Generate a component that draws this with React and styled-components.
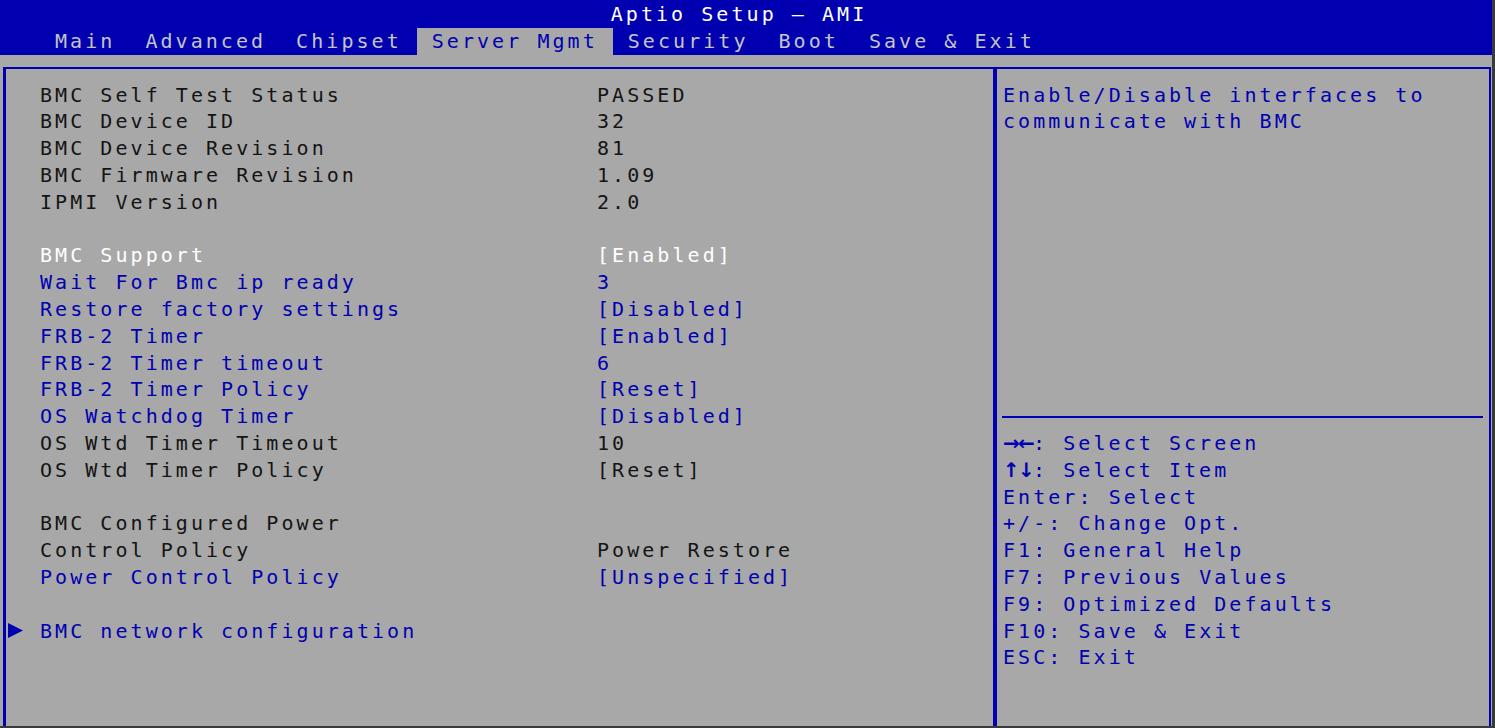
import React from 'react';
import styled, { createGlobalStyle } from 'styled-components';

const BLUE = '#0000b0';
const GRAY = '#a8a8a8';
const ROW = '26.8px';

const GlobalStyle = createGlobalStyle`
	html, body {
		margin: 0;
		padding: 0;
		background: #3a3a3a;
	}
`;

const Screen = styled.div`
	width: 1495px;
	height: 728px;
	box-sizing: border-box;
	display: flex;
	flex-direction: column;
	overflow: hidden;
	background: ${GRAY};
	border-right: 3px solid #3a3a3a;
	border-bottom: 2px solid #3a3a3a;
	font-family: "DejaVu Sans Mono", "Liberation Mono", monospace;
	font-size: 20px;
	letter-spacing: 3.05px;
	line-height: ${ROW};
	white-space: pre;
`;

const Header = styled.div`
	background: ${BLUE};
	padding-top: 1px;
`;

const Title = styled.div`
	height: ${ROW};
	text-align: center;
	padding-right: 14px;
	color: #ffffff;
`;

const TabBar = styled.div`
	display: flex;
	height: ${ROW};
	padding-left: 40px;
`;

const Tab = styled.div`
	padding: 0 15px;
	color: ${({ active }) => (active ? BLUE : '#c4c4c4')};
	background: ${({ active }) => (active ? GRAY : 'transparent')};
`;

const Body = styled.div`
	flex: 1;
	display: flex;
	min-height: 0;
	padding: 12px 1px 0 3px;
`;

const Frame = styled.div`
	flex: 1;
	display: flex;
	border-top: 2px solid ${BLUE};
	border-left: 3px solid ${BLUE};
	border-right: 2px solid ${BLUE};
`;

const MainPanel = styled.div`
	width: 987px;
	flex-shrink: 0;
	padding-top: 13px;
`;

const Row = styled.div`
	display: grid;
	grid-template-columns: 34px 557px 1fr;
	height: ${ROW};
	color: ${({ tone }) => (tone === 'blue' ? BLUE : tone === 'white' ? '#ffffff' : '#141414')};
`;

const Marker = styled.span`
	display: flex;
	align-items: center;
	padding-left: 2px;
`;

const HelpPanel = styled.div`
	flex: 1;
	display: flex;
	flex-direction: column;
	border-left: 4px solid ${BLUE};
	padding: 13px 0 0 6px;
	color: ${BLUE};
`;

const HelpTop = styled.div`
	height: calc(${ROW} * 12);
`;

const HelpLine = styled.div`
	height: ${ROW};
`;

const HelpDivider = styled.div`
	height: ${ROW};
	display: flex;
	align-items: center;
	padding-right: 6px;
	margin-left: -1px;
`;

const HelpRule = styled.div`
	flex: 1;
	height: 2px;
	background: ${BLUE};
`;

const KeyGlyph = styled.span`
	display: inline-block;
	width: 15.05px;
	text-align: center;
	font-family: "DejaVu Sans", sans-serif;
	font-weight: bold;
	letter-spacing: 0;
`;

const SubmenuArrow = () => (
	<svg width="15" height="15" viewBox="0 0 15 15">
		<polygon points="0,0 15,7.5 0,15" fill={BLUE} />
	</svg>
);

const tabs = ['Main', 'Advanced', 'Chipset', 'Server Mgmt', 'Security', 'Boot', 'Save & Exit'];

const rows = [
	{ label: 'BMC Self Test Status', value: 'PASSED' },
	{ label: 'BMC Device ID', value: '32' },
	{ label: 'BMC Device Revision', value: '81' },
	{ label: 'BMC Firmware Revision', value: '1.09' },
	{ label: 'IPMI Version', value: '2.0' },
	null,
	{ label: 'BMC Support', value: '[Enabled]', tone: 'white' },
	{ label: 'Wait For Bmc ip ready', value: '3', tone: 'blue' },
	{ label: 'Restore factory settings', value: '[Disabled]', tone: 'blue' },
	{ label: 'FRB-2 Timer', value: '[Enabled]', tone: 'blue' },
	{ label: 'FRB-2 Timer timeout', value: '6', tone: 'blue' },
	{ label: 'FRB-2 Timer Policy', value: '[Reset]', tone: 'blue' },
	{ label: 'OS Watchdog Timer', value: '[Disabled]', tone: 'blue' },
	{ label: 'OS Wtd Timer Timeout', value: '10' },
	{ label: 'OS Wtd Timer Policy', value: '[Reset]' },
	null,
	{ label: 'BMC Configured Power', value: '' },
	{ label: 'Control Policy', value: 'Power Restore' },
	{ label: 'Power Control Policy', value: '[Unspecified]', tone: 'blue' },
	null,
	{ label: 'BMC network configuration', value: '', tone: 'blue', submenu: true },
];

const keys = [
	[<><KeyGlyph>→</KeyGlyph><KeyGlyph>←</KeyGlyph></>, ': Select Screen'],
	[<><KeyGlyph>↑</KeyGlyph><KeyGlyph>↓</KeyGlyph></>, ': Select Item'],
	['Enter', ': Select'],
	['+/-', ': Change Opt.'],
	['F1', ': General Help'],
	['F7', ': Previous Values'],
	['F9', ': Optimized Defaults'],
	['F10', ': Save & Exit'],
	['ESC', ': Exit'],
];

export default function App() {
	return (
		<>
			<GlobalStyle />
			<Screen>
				<Header>
					<Title>Aptio Setup – AMI</Title>
					<TabBar>
						{tabs.map((t) => (
							<Tab key={t} active={t === 'Server Mgmt'}>{t}</Tab>
						))}
					</TabBar>
				</Header>
				<Body>
					<Frame>
						<MainPanel>
							{rows.map((r, i) =>
								r ? (
									<Row key={i} tone={r.tone}>
										<Marker>{r.submenu ? <SubmenuArrow /> : null}</Marker>
										<span>{r.label}</span>
										<span>{r.value}</span>
									</Row>
								) : (
									<Row key={i} />
								)
							)}
						</MainPanel>
						<HelpPanel>
							<HelpTop>
								<HelpLine>Enable/Disable interfaces to</HelpLine>
								<HelpLine>communicate with BMC</HelpLine>
							</HelpTop>
							<HelpDivider>
								<HelpRule />
							</HelpDivider>
							{keys.map(([k, text], i) => (
								<HelpLine key={i}>{k}{text}</HelpLine>
							))}
						</HelpPanel>
					</Frame>
				</Body>
			</Screen>
		</>
	);
}
